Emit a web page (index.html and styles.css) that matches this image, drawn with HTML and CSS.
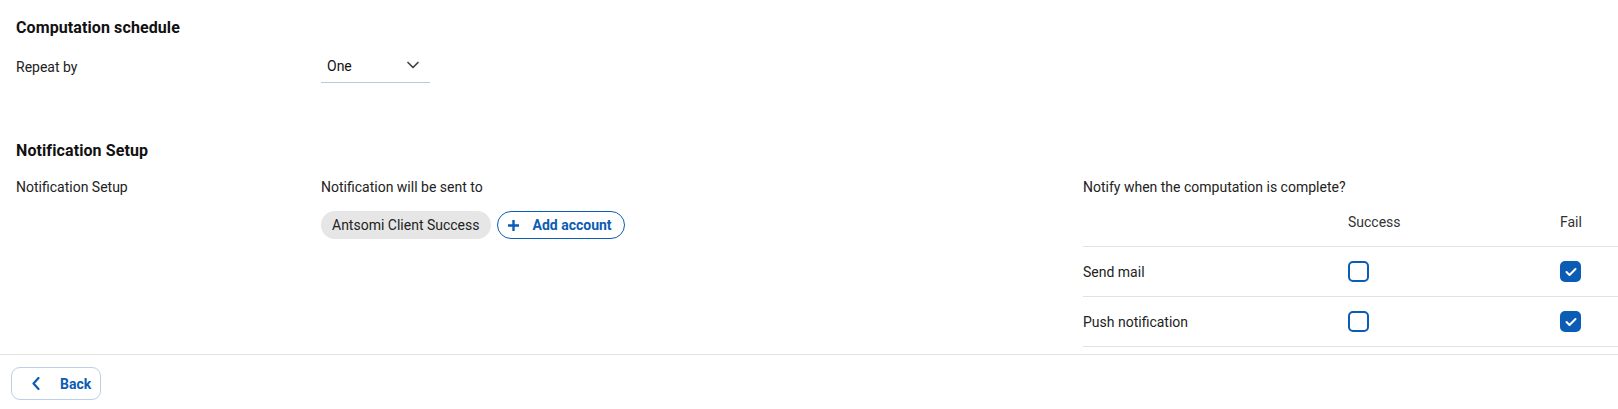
FILE: index.html
```html
<!DOCTYPE html>
<html lang="en">
<head>
<meta charset="utf-8">
<title>Computation schedule</title>
<link rel="stylesheet" href="styles.css">
</head>
<body>
<main class="page">
  <section class="section">
    <h2 class="section-title">Computation schedule</h2>
    <div class="row row-schedule">
      <div class="label">Repeat by</div>
      <div class="field">
        <div class="select">
          <span class="select-value">One</span>
          <svg class="select-caret" width="12" height="8" viewBox="0 0 12 8" aria-hidden="true"><path d="M1 1.5 L6 6.5 L11 1.5" fill="none" stroke="#444" stroke-width="1.7" stroke-linecap="round" stroke-linejoin="round"/></svg>
        </div>
      </div>
    </div>
  </section>

  <section class="section section-notif">
    <h2 class="section-title">Notification Setup</h2>
    <div class="row row-notif">
      <div class="label">Notification Setup</div>
      <div class="recipients">
        <div class="sub">Notification will be sent to</div>
        <div class="chips">
          <span class="chip">Antsomi Client Success</span>
          <button class="btn-add" type="button">
            <svg width="11" height="11" viewBox="0 0 11 11" aria-hidden="true"><path d="M5.5 0.5 V10.5 M0.5 5.5 H10.5" stroke="#0b5cb5" stroke-width="2.4" stroke-linecap="round"/></svg>
            <span>Add account</span>
          </button>
        </div>
      </div>
      <div class="notify">
        <div class="sub">Notify when the computation is complete?</div>
        <div class="ntable">
          <div class="nrow nhead">
            <div></div>
            <div>Success</div>
            <div>Fail</div>
          </div>
          <div class="nrow">
            <div>Send mail</div>
            <div><span class="cb"></span></div>
            <div><span class="cb cb-on"><svg width="12" height="10" viewBox="0 0 12 10" aria-hidden="true"><path d="M1.5 5 L4.5 8 L10.5 2" fill="none" stroke="#fff" stroke-width="2" stroke-linecap="round" stroke-linejoin="round"/></svg></span></div>
          </div>
          <div class="nrow">
            <div>Push notification</div>
            <div><span class="cb"></span></div>
            <div><span class="cb cb-on"><svg width="12" height="10" viewBox="0 0 12 10" aria-hidden="true"><path d="M1.5 5 L4.5 8 L10.5 2" fill="none" stroke="#fff" stroke-width="2" stroke-linecap="round" stroke-linejoin="round"/></svg></span></div>
          </div>
        </div>
      </div>
    </div>
  </section>
</main>
<footer class="footer">
  <button class="btn-back" type="button">
    <svg width="8" height="13" viewBox="0 0 8 13" aria-hidden="true"><path d="M6.5 1 L1.5 6.5 L6.5 12" fill="none" stroke="#0b5cb5" stroke-width="2.2" stroke-linecap="round" stroke-linejoin="round"/></svg>
    <span>Back</span>
  </button>
</footer>
</body>
</html>
```

FILE: styles.css
```css
* { box-sizing: border-box; }

html, body {
  margin: 0;
  padding: 0;
  background: #fff;
}

body {
  font-family: Roboto, "Liberation Sans", Arial, sans-serif;
  font-size: 14px;
  line-height: 20px;
  color: #222;
  width: 1618px;
  height: 409px;
  overflow: hidden;
}

.page {
  padding: 16px 0 0 16px;
  height: 347px;
}

.section-title {
  margin: 0;
  font-size: 16px;
  line-height: 24px;
  font-weight: 700;
  letter-spacing: 0.1px;
  color: #111;
}

.row {
  display: grid;
  grid-template-columns: 305px 762px 1fr;
}

.row-schedule {
  margin-top: 10px;
  align-items: center;
}

.label {
  color: #222;
}

.row-schedule .label {
  line-height: 32px;
}

.select {
  width: 109px;
  height: 33px;
  padding: 0 11px 1px 6px;
  border-bottom: 1px solid #b9c9dc;
  display: flex;
  align-items: center;
  justify-content: space-between;
  color: #111;
}

.select-caret {
  display: block;
  margin-top: -2px;
}

.section-notif {
  margin-top: 56px;
}

.row-notif {
  margin-top: 14px;
}

.chips {
  margin-top: 14px;
  display: flex;
  gap: 6px;
}

.chip {
  height: 28px;
  padding: 0 11px;
  border-radius: 14px;
  background: #e6e6e6;
  display: inline-flex;
  align-items: center;
  color: #222;
}

.btn-add {
  height: 28px;
  padding: 0 12px 0 10px;
  border: 1px solid #0b5cb5;
  border-radius: 14px;
  background: #fff;
  display: inline-flex;
  align-items: center;
  gap: 14px;
  font: 700 14px/20px Roboto, "Liberation Sans", Arial, sans-serif;
  color: #0b5cb5;
}

.btn-add svg { display: block; }

.ntable {
  margin-top: 15px;
}

.nrow {
  display: grid;
  grid-template-columns: 265px 212px 1fr;
  align-items: center;
  height: 50px;
  border-bottom: 1px solid #e2e2e2;
  color: #222;
}

.nhead {
  height: 35px;
  align-items: start;
  color: #333;
}

.cb {
  width: 21px;
  height: 21px;
  border: 2px solid #0b5cb5;
  border-radius: 5px;
  display: flex;
  align-items: center;
  justify-content: center;
  background: #fff;
}

.cb-on {
  background: #0b5cb5;
}

.cb svg { display: block; }

.footer {
  margin-top: 7px;
  border-top: 1px solid #e2e2e2;
  padding: 12px 0 0 11px;
}

.btn-back {
  width: 90px;
  height: 33px;
  border: 1px solid #b9d0ea;
  border-radius: 9px;
  background: #fff;
  display: flex;
  align-items: center;
  padding: 0 0 0 20px;
  gap: 20px;
  font: 700 14px/20px Roboto, "Liberation Sans", Arial, sans-serif;
  color: #0b5cb5;
}

.btn-back svg { display: block; }
```
